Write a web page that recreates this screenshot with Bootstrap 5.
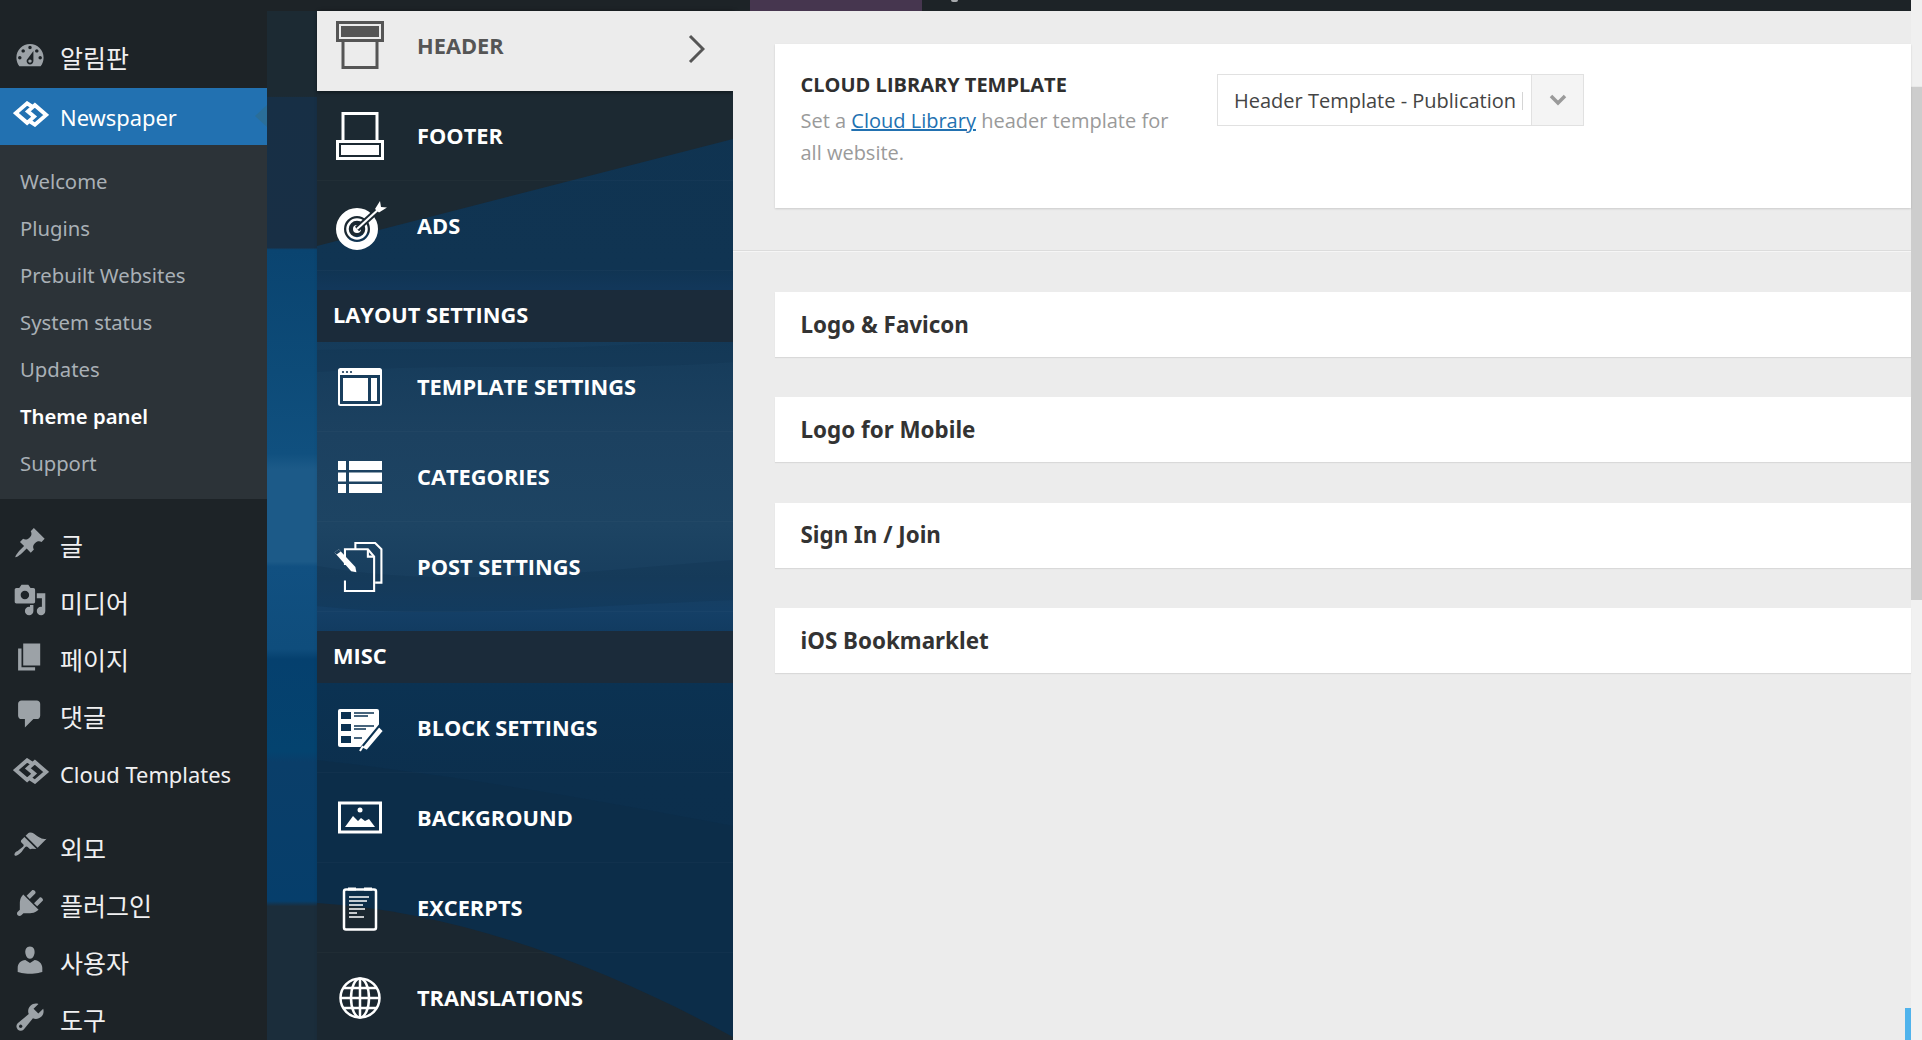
<!DOCTYPE html>
<html lang="ko">
<head>
<meta charset="utf-8">
<title>Theme panel</title>
<link href="https://cdn.jsdelivr.net/npm/bootstrap@5.3.0/dist/css/bootstrap.min.css" rel="stylesheet">
<style>
html,body{height:100%;overflow:hidden;background:#ececec}
body{font-family:"Noto Sans","Noto Sans CJK KR",sans-serif}
.pg{height:1040px}
.frame{min-width:0}
.topline{height:11px;background:#1d2327;flex:none}
.topspace{width:750px}
.toppurple{width:172px;background:#46364f}
.topdot{width:7px;height:2px;margin-left:29px;background:#a7aaad;border-radius:0 0 4px 4px}
.wpside{width:267px;background:#1d2327;color:#f0f0f1;flex:none}
.wpmenu{margin:0;padding:18px 0 0;list-style:none}
.wpitem{height:57px;font-size:21.9px;position:relative}
.wpitem svg{width:34px;height:34px;fill:#9ca2a7;margin-bottom:6px;display:block}
.wpitem svg.logoic{width:36px;height:26px;fill:none}
.ko{font-family:"Noto Sans CJK KR",sans-serif;font-size:25px;line-height:1;padding-bottom:2px}
.la{padding-top:3px}
.wpicon{width:60px;flex:none;padding-left:13px}
.wpfirst{height:59px}
.wpcur{background:#2271b1;color:#fff}
.wpcur svg{fill:#fff}
.wpcur::after{content:"";position:absolute;right:0;top:17px;border:11.5px solid transparent;border-left:0;border-right:12px solid #2a6e99}
.wpsub{background:#2c3338;margin:0;padding:13px 0 12px;list-style:none}
.wpsub li{height:47px;padding-left:20px;font-size:20.3px;color:#a9b0b6}
.wpsub li.on{color:#fff;font-weight:600}
.mt18{margin-top:18.5px}
.mt16{margin-top:18.3px}
.tdwrap{width:466px;flex:none;position:relative;padding-left:50px;background:#1c2a33}
.tdbg{position:absolute;left:0;top:0;width:466px;height:1029px}
.tdlist{position:relative;width:416px;height:100%;font-family:"Open Sans","Noto Sans",sans-serif;font-weight:700;color:#fff;box-shadow:2px 0 4px rgba(0,0,0,.28)}
.tdrow{height:90px;padding-top:1px;font-size:21.8px;border-bottom:1px solid rgba(255,255,255,.025)}
.tdrow .icobox{width:100px;padding-left:19px;flex:none;line-height:0}
.tdrow svg{width:48px;height:48px}
.tdrow svg.ic52{width:52px;height:50px;margin-bottom:3px}
.tdrow svg.ic52w{width:53px;height:50px;margin-left:-4px}
.tdact{height:80px;padding-top:0;background:#ececec;color:#555;box-shadow:0 2px 3px rgba(0,0,0,.35);position:relative;border:0}
.tdact>span{margin-bottom:10px}
.tdact .icobox{margin-bottom:12px}
.tdrow svg.tdarrow{width:17px;height:30px;margin-right:28px;margin-bottom:4px}
.tdsec{height:52px;padding:0 0 2px 16px;font-size:21.8px;background:#1b2b3a}
.gap19{margin-top:19px}
.tdmain{min-width:0;background:#ececec;padding-top:33px;position:relative}
.setbox{height:164px;margin-left:42px;padding:26px 26px 0 25.5px;background:#fff;box-shadow:0 1px 2px rgba(0,0,0,.14)}
.settext{width:380px;flex:none}
.settitle{font-family:"Open Sans",sans-serif;font-weight:700;font-size:20px;line-height:30px;color:#2f2f2f}
.setdesc{font-family:"Open Sans",sans-serif;font-size:20px;line-height:32px;color:#9a9a9a;margin-top:5px}
.setdesc a{color:#2271b1}
.pick{width:367px;height:52px;margin-left:36.5px;margin-top:4px;background:#fff;border:1px solid #e1e1e1;font-family:"Open Sans",sans-serif;font-size:20px;color:#444}
.picktext{padding:2px 0 0 16px;white-space:nowrap;overflow:hidden;min-width:0}
.picktext::after{content:"";width:1px;height:18px;margin-left:6px;background:#d5d5d5}
.pickarr{width:52px;flex:none;background:#f4f4f4;border-left:1px solid #e1e1e1}
.pickarr svg{width:18px;height:12px}
.sepline{height:1px;margin-top:42px;background:#dcdcdc;box-shadow:0 1px 0 #f6f6f6}
.secbox{height:65px;margin:41px 0 -0.67px 42px;padding-left:25.5px;background:#fff;font-weight:700;font-size:22.4px;color:#333;box-shadow:0 1px 1px rgba(0,0,0,.08)}
.scrcol{width:11px;flex:none;background:#f1f1f1}
.scrtop{height:87px;background:#f0f0f0;border-bottom:1px solid #e8e8e8}
.scrthumb{height:513px;background:#cdcdcd}
.bluebar{position:absolute;right:11px;bottom:0;width:6px;height:32px;background:#4fb3ec}
</style>
</head>
<body>
<div class="pg d-flex position-relative">
  <div class="frame d-flex flex-column flex-grow-1">
    <div class="topline d-flex">
      <div class="topspace"></div><div class="toppurple"></div><div class="topdot"></div>
    </div>
    <div class="d-flex flex-grow-1">
      <aside class="wpside">
        <ul class="wpmenu">
          <li class="wpitem wpfirst d-flex align-items-center"><span class="wpicon"><svg viewBox="0 0 20 20"><path d="M3.76 16h12.48c1.1-1.37 1.76-3.11 1.76-5 0-4.42-3.58-8-8-8s-8 3.58-8 8c0 1.89.66 3.63 1.76 5zM10 4c.55 0 1 .45 1 1s-.45 1-1 1-1-.45-1-1 .45-1 1-1zM6 6c.55 0 1 .45 1 1s-.45 1-1 1-1-.45-1-1 .45-1 1-1zm8 0c.55 0 1 .45 1 1s-.45 1-1 1-1-.45-1-1 .45-1 1-1zm-5.37 5.55L12 7v6c0 1.1-.9 2-2 2s-2-.9-2-2c0-.57.24-1.08.63-1.45zM4 10c.55 0 1 .45 1 1s-.45 1-1 1-1-.45-1-1 .45-1 1-1zm12 0c.55 0 1 .45 1 1s-.45 1-1 1-1-.45-1-1 .45-1 1-1zm-5 3c0-.55-.45-1-1-1s-1 .45-1 1 .45 1 1 1 1-.45 1-1z" fill-rule="evenodd"/></svg></span><span class="ko">알림판</span></li>
          <li class="wpitem wpcur d-flex align-items-center"><span class="wpicon"><svg class="logoic" viewBox="0 0 27 20"><path d="M15 4.800 10.500 1.800 1.800 9.300l8.700 7.500 5.400-4.800-4-3.400M12 15.200l4.500 3 8.700-7.500-8.700-7.500-5.400 4.800 4 3.400" stroke="#fff" stroke-width="3"/></svg></span><span class="la">Newspaper</span></li>
        </ul>
        <ul class="wpsub">
          <li class="d-flex align-items-center">Welcome</li>
          <li class="d-flex align-items-center">Plugins</li>
          <li class="d-flex align-items-center">Prebuilt Websites</li>
          <li class="d-flex align-items-center">System status</li>
          <li class="d-flex align-items-center">Updates</li>
          <li class="d-flex align-items-center on">Theme panel</li>
          <li class="d-flex align-items-center">Support</li>
        </ul>
        <ul class="wpmenu p-0 mt18">
          <li class="wpitem d-flex align-items-center"><span class="wpicon"><svg viewBox="0 0 20 20"><path d="M10.44 3.02l1.82-1.82 6.36 6.35-1.83 1.82c-1.05-.68-2.48-.57-3.41.36l-.75.75c-.92.93-1.04 2.35-.35 3.41l-1.83 1.82-2.41-2.41-2.8 2.79c-.42.42-3.38 2.71-3.8 2.29s1.86-3.39 2.28-3.81l2.79-2.79L4.1 9.36l1.83-1.82c1.05.69 2.48.57 3.4-.36l.75-.75c.93-.92 1.05-2.35.36-3.41z"/></svg></span><span class="ko">글</span></li>
          <li class="wpitem d-flex align-items-center"><span class="wpicon"><svg viewBox="0 0 20 20"><path fill-rule="evenodd" d="M13 11V4c0-.55-.45-1-1-1h-1.67L9 1H5L3.67 3H2c-.55 0-1 .45-1 1v7c0 .55.45 1 1 1h10c.55 0 1-.45 1-1zM7 4.500c1.38 0 2.500 1.120 2.500 2.500S8.380 9.500 7 9.500 4.500 8.380 4.500 7 5.620 4.500 7 4.500zM14 6h5v10.500c0 1.380-1.120 2.500-2.500 2.500S14 17.880 14 16.500s1.120-2.500 2.500-2.500c.17 0 .34.02.5.05V9h-3V6zm-4 8.050V13h2v3.500c0 1.380-1.120 2.500-2.500 2.500S7 17.880 7 16.500 8.120 14 9.500 14c.17 0 .34.02.5.05z"/></svg></span><span class="ko">미디어</span></li>
          <li class="wpitem d-flex align-items-center"><span class="wpicon"><svg viewBox="0 0 20 20"><path d="M6 15V2h10v13H6zm-1 1h8v2H3V5h2v11z"/></svg></span><span class="ko">페이지</span></li>
          <li class="wpitem d-flex align-items-center"><span class="wpicon"><svg viewBox="0 0 20 20"><path d="M5 2h9c1.1 0 2 .9 2 2v7c0 1.1-.9 2-2 2h-2l-5 5v-5H5c-1.1 0-2-.9-2-2V4c0-1.1.9-2 2-2z"/></svg></span><span class="ko">댓글</span></li>
          <li class="wpitem d-flex align-items-center"><span class="wpicon"><svg class="logoic" viewBox="0 0 27 20"><path d="M15 4.800 10.500 1.800 1.800 9.300l8.700 7.500 5.400-4.800-4-3.400M12 15.200l4.500 3 8.700-7.500-8.700-7.500-5.400 4.800 4 3.400" stroke="#9ca2a7" stroke-width="3"/></svg></span><span class="la">Cloud Templates</span></li>
          <li class="wpitem d-flex align-items-center mt16"><span class="wpicon"><svg viewBox="0 0 20 20"><path d="M14.48 11.06L7.41 3.99l1.5-1.5c.5-.56 2.3-.47 3.51.32 1.21.8 1.43 1.28 2.91 2.1 1.18.64 2.45 1.26 4.45.85zm-.71.71L6.7 4.7 4.93 6.47c-.39.39-.39 1.02 0 1.41l1.06 1.06c.39.39.39 1.03 0 1.42-.6.6-1.43 1.11-2.21 1.69-.35.26-.7.53-1.01.84C1.43 13.23.4 14.85 1.07 15.52c.67.67 2.29-.36 3.63-1.7.31-.31.58-.66.84-1.01.58-.78 1.09-1.61 1.69-2.21.39-.39 1.03-.39 1.42 0l1.06 1.06c.39.39 1.02.39 1.41 0z"/></svg></span><span class="ko">외모</span></li>
          <li class="wpitem d-flex align-items-center"><span class="wpicon"><svg viewBox="0 0 20 20"><path d="M13.11 4.36L9.87 7.6 8 5.73l3.24-3.24c.35-.34 1.05-.2 1.56.32.52.51.66 1.21.31 1.55zm-8 1.77l.91-1.12 9.01 9.01-1.19.84c-.71.71-2.63 1.16-3.82 1.16H6.14L4.9 17.26c-.59.59-1.54.59-2.12 0-.59-.58-.59-1.53 0-2.12l1.24-1.24v-3.88c0-1.13.4-3.19 1.09-3.89zm7.26 3.97l3.24-3.24c.34-.35 1.04-.21 1.55.31.52.51.66 1.21.31 1.55l-3.24 3.25z"/></svg></span><span class="ko">플러그인</span></li>
          <li class="wpitem d-flex align-items-center"><span class="wpicon"><svg viewBox="0 0 20 20"><path d="M10 9.25c-2.27 0-2.73-3.44-2.73-3.44C7 4.02 7.82 2 9.97 2c2.16 0 2.98 2.02 2.71 3.81 0 0-.41 3.44-2.68 3.44zm0 2.57L12.72 10c2.39 0 4.52 2.33 4.52 4.53v2.49s-3.65 1.13-7.24 1.13c-3.65 0-7.24-1.13-7.24-1.13v-2.49c0-2.25 1.94-4.48 4.47-4.48z"/></svg></span><span class="ko">사용자</span></li>
          <li class="wpitem d-flex align-items-center"><span class="wpicon"><svg viewBox="0 0 20 20"><path fill-rule="evenodd" d="M16.68 9.77c-1.34 1.34-3.3 1.67-4.95.99l-5.41 6.52c-.99.99-2.59.99-3.58 0s-.99-2.59 0-3.57l6.52-5.42c-.68-1.65-.35-3.61.99-4.95 1.28-1.28 3.12-1.62 4.72-1.06l-2.89 2.89 2.82 2.82 2.86-2.87c.53 1.58.18 3.39-1.08 4.67zM3.81 16.21c.4.39 1.04.39 1.43 0 .4-.4.4-1.04 0-1.43-.39-.4-1.03-.4-1.43 0-.39.39-.39 1.03 0 1.43z"/></svg></span><span class="ko">도구</span></li>
        </ul>
      </aside>

      <div class="tdwrap">
        <svg class="tdbg" viewBox="267 11 466 1029" preserveAspectRatio="none" aria-hidden="true">
          <defs>
            <linearGradient id="gs" gradientUnits="userSpaceOnUse" x1="0" y1="11" x2="0" y2="1040">
              <stop offset="0" stop-color="#1c2a33"/><stop offset=".083" stop-color="#1c2a33"/><stop offset=".084" stop-color="#172f45"/>
              <stop offset=".23" stop-color="#182f45"/><stop offset=".232" stop-color="#0a4470"/><stop offset=".35" stop-color="#0d4b78"/>
              <stop offset=".43" stop-color="#10507f"/><stop offset=".445" stop-color="#1c5a88"/><stop offset=".535" stop-color="#1c5a88"/>
              <stop offset=".54" stop-color="#115081"/><stop offset=".62" stop-color="#0f4d7c"/><stop offset=".63" stop-color="#05406e"/>
              <stop offset=".72" stop-color="#04436f"/><stop offset=".73" stop-color="#0a3e69"/><stop offset=".865" stop-color="#063e6b"/>
              <stop offset=".87" stop-color="#1b2d3b"/><stop offset="1" stop-color="#1b2d3b"/>
            </linearGradient>
            <linearGradient id="gm" gradientUnits="userSpaceOnUse" x1="0" y1="11" x2="0" y2="1040">
              <stop offset="0" stop-color="#0f3350"/><stop offset=".25" stop-color="#103452"/><stop offset=".27" stop-color="#12375a"/>
              <stop offset=".32" stop-color="#153b5a"/><stop offset=".41" stop-color="#1c4160"/><stop offset=".5" stop-color="#1d4463"/>
              <stop offset=".55" stop-color="#183e5e"/><stop offset=".585" stop-color="#143f66"/><stop offset=".655" stop-color="#0b3252"/>
              <stop offset=".75" stop-color="#0c2f4d"/><stop offset="1" stop-color="#0c2e4c"/>
            </linearGradient>
          </defs>
          <rect x="267" y="11" width="50" height="1029" fill="url(#gs)"/>
          <rect x="317" y="11" width="416" height="1029" fill="url(#gm)"/>
          <polygon points="317,90 733,90 733,139 317,246" fill="#1c2932"/>
          <path d="M317 350C420 348 520 352 640 344L733 342V362C600 372 440 362 317 372Z" fill="#0e2f4b" opacity=".25"/>
          <path d="M317 566 C450 590 600 570 733 560 V 600 C 580 606 440 620 317 606Z" fill="#0f3350" opacity=".3"/>
          <path d="M317 760C450 775 600 800 733 826V1040H317Z" fill="#0c2d49" opacity=".8"/>
          <path d="M317 903C470 912 620 975 733 1037V1040H317Z" fill="#1b2730"/>
        </svg>
        <div class="tdlist">
          <div class="tdrow tdact d-flex align-items-center">
            <span class="icobox"><svg viewBox="0 0 48 48"><rect x="1.500" y="1.500" width="45" height="18" fill="none" stroke="#555" stroke-width="3"/><rect x="5" y="5" width="38" height="11" fill="#555"/><rect x="7" y="19.500" width="34" height="27" fill="none" stroke="#555" stroke-width="3"/></svg></span>
            <span class="flex-grow-1">HEADER</span>
            <svg class="tdarrow" viewBox="0 0 17 30"><path d="M2 2l13 13L2 28" fill="none" stroke="#555" stroke-width="3"/></svg>
          </div>
          <div class="tdrow d-flex align-items-center">
            <span class="icobox"><svg viewBox="0 0 48 48"><rect x="7" y="1.500" width="34" height="28" fill="none" stroke="#fff" stroke-width="3"/><rect x="1.500" y="29.500" width="45" height="17" fill="none" stroke="#fff" stroke-width="3"/><rect x="5" y="33" width="38" height="10" fill="#fff"/></svg></span>
            <span>FOOTER</span>
          </div>
          <div class="tdrow d-flex align-items-center">
            <span class="icobox"><svg class="ic52" viewBox="0 0 52 50"><circle cx="21" cy="29" r="17" fill="none" stroke="#fff" stroke-width="8"/><circle cx="21" cy="29" r="9.500" fill="none" stroke="#fff" stroke-width="2.500"/><circle cx="21" cy="29" r="4" fill="#fff"/><path d="M21 29 44 8" stroke="#1c2932" stroke-width="6"/><path d="M21 29 44 8" stroke="#fff" stroke-width="2.200"/><path d="M39 9l5-8 1 6 6 .5-8 5z" fill="#fff"/></svg></span>
            <span>ADS</span>
          </div>
          <div class="tdsec gap19 d-flex align-items-center">LAYOUT SETTINGS</div>
          <div class="tdrow d-flex align-items-center">
            <span class="icobox"><svg viewBox="0 0 48 48"><rect x="3" y="6" width="42" height="36" rx="1.500" fill="none" stroke="#fff" stroke-width="2"/><rect x="3" y="6" width="42" height="6" fill="#fff"/><circle cx="7" cy="9" r="1.100" fill="#173a58"/><circle cx="11" cy="9" r="1.100" fill="#173a58"/><circle cx="15" cy="9" r="1.100" fill="#173a58"/><rect x="7" y="15" width="25" height="23" fill="#fff"/><rect x="35" y="15" width="6" height="23" fill="#fff"/></svg></span>
            <span>TEMPLATE SETTINGS</span>
          </div>
          <div class="tdrow d-flex align-items-center">
            <span class="icobox"><svg viewBox="0 0 48 48"><path fill="#fff" d="M2 8h8v9H2zM13 8h33v9H13zM2 19.500h8v9H2zM13 19.500h33v9H13zM2 31h8v9H2zM13 31h33v9H13z"/></svg></span>
            <span>CATEGORIES</span>
          </div>
          <div class="tdrow d-flex align-items-center">
            <span class="icobox"><svg class="ic52w" viewBox="0 0 50 48"><g fill="none" stroke="#fff" stroke-width="2"><path d="M22 7V1h19l6 6v32h-6"/><path d="M12 22V7h22l6 7v33H12V37"/><path d="M34 7v7h6"/></g><path d="M2 10l4-3 16 17 1 5-5-1z" fill="#fff"/><path d="M2 10l4-3 2 2-4 3z" fill="#1c4160"/></svg></span>
            <span>POST SETTINGS</span>
          </div>
          <div class="tdsec gap19 d-flex align-items-center">MISC</div>
          <div class="tdrow d-flex align-items-center">
            <span class="icobox"><svg viewBox="0 0 48 48"><path fill="#fff" d="M4 5h37a2 2 0 0 1 2 2v21L29 43H4a2 2 0 0 1-2-2V7a2 2 0 0 1 2-2z"/><path fill="#0b3252" d="M5 8h10v7H5zM5 20h10v7H5zM5 32h10v7H5z"/><path stroke="#0b3252" stroke-width="1.300" d="M18 9h20M18 12h14M18 22h20M18 25h12M18 34h8"/><path d="M25 44 43 22l5 5-17 20z" fill="#fff" stroke="#0b3252" stroke-width="2"/><path d="M24 47l3-5" stroke="#fff" stroke-width="2"/></svg></span>
            <span>BLOCK SETTINGS</span>
          </div>
          <div class="tdrow d-flex align-items-center">
            <span class="icobox"><svg viewBox="0 0 48 48"><rect x="3.500" y="9" width="41" height="29" fill="none" stroke="#fff" stroke-width="3"/><circle cx="24" cy="16" r="2.500" fill="#fff"/><path d="M9 33l8-11 5 5 3-3 4 3 4-2 6 8z" fill="#fff"/></svg></span>
            <span>BACKGROUND</span>
          </div>
          <div class="tdrow d-flex align-items-center">
            <span class="icobox"><svg viewBox="0 0 48 48"><rect x="8" y="5.500" width="32" height="40" rx="2" fill="none" stroke="#fff" stroke-width="2.500"/><path d="M12 5h8M28 5h8" stroke="#fff" stroke-width="3"/><path stroke="#fff" stroke-width="1.500" d="M13 13h20M13 17h18M13 21h14M13 25h16M13 29h8M13 33h15"/></svg></span>
            <span>EXCERPTS</span>
          </div>
          <div class="tdrow d-flex align-items-center">
            <span class="icobox"><svg viewBox="0 0 48 48"><g fill="none" stroke="#fff" stroke-width="2.500"><circle cx="24" cy="24" r="19.500"/><ellipse cx="24" cy="24" rx="9" ry="19.500"/><path d="M24 4.500v39M4.500 24h39M7.500 14h33M7.500 34h33"/></g></svg></span>
            <span>TRANSLATIONS</span>
          </div>
        </div>
      </div>

      <main class="tdmain flex-grow-1">
        <div class="setbox d-flex">
          <div class="settext">
            <div class="settitle">CLOUD LIBRARY TEMPLATE</div>
            <div class="setdesc">Set a <a href="#">Cloud Library</a> header template for all website.</div>
          </div>
          <div class="pick d-flex">
            <div class="picktext flex-grow-1 d-flex align-items-center">Header Template - Publication</div>
            <div class="pickarr d-flex align-items-center justify-content-center"><svg viewBox="0 0 18 12"><path d="M2 2l7 7 7-7" fill="none" stroke="#9a9a9a" stroke-width="3.500"/></svg></div>
          </div>
        </div>
        <div class="sepline"></div>
        <div class="secbox d-flex align-items-center">Logo &amp; Favicon</div>
        <div class="secbox d-flex align-items-center">Logo for Mobile</div>
        <div class="secbox d-flex align-items-center">Sign In / Join</div>
        <div class="secbox d-flex align-items-center">iOS Bookmarklet</div>
      </main>
    </div>
  </div>
  <div class="scrcol d-flex flex-column">
    <div class="scrtop"></div>
    <div class="scrthumb"></div>
  </div>
  <div class="bluebar"></div>
</div>
<script src="https://cdn.jsdelivr.net/npm/bootstrap@5.3.0/dist/js/bootstrap.bundle.min.js"></script>
</body>
</html>
